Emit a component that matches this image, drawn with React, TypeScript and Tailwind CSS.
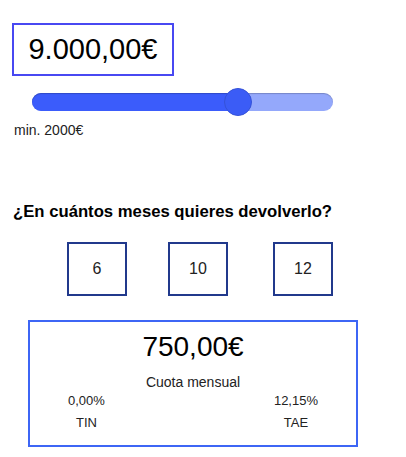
import React from "react";

export default function App() {
  const months = [
    { v: "6", ml: "ml-[67px]" },
    { v: "10", ml: "ml-[41px]" },
    { v: "12", ml: "ml-[45px]" },
  ];
  return (
    <div
      className="w-[406px] h-[457px] bg-white text-black flex flex-col"
      style={{ fontFamily: '"Liberation Sans", Arial, sans-serif' }}
    >
      <div className="mt-[23px] ml-[12px] w-[162px] h-[53px] border-2 border-[#4848f2] flex items-center justify-center">
        <span className="text-[29px] leading-none">9.000,00€</span>
      </div>

      <div className="relative mt-[17px] ml-[32px] w-[301px] h-[18px] rounded-full bg-[#94a8fb] shadow-[inset_0_1px_1px_rgba(0,0,0,0.2)]">
        <div className="h-full w-[210px] rounded-full bg-[#3b5cfb] shadow-[inset_0_1px_1px_rgba(0,0,0,0.2)]" />
        <div className="absolute left-[192px] top-[-5px] w-[28px] h-[28px] rounded-full bg-[#3b5cf6] border border-[#3552d8]" />
      </div>

      <div className="mt-[11px] ml-[14px] text-[14px] leading-[16px] text-[#222]">min. 2000€</div>

      <div className="mt-[64px] ml-[13px] text-[16.7px] leading-[20px] font-bold">
        ¿En cuántos meses quieres devolverlo?
      </div>

      <div className="mt-[20px] flex">
        {months.map((m) => (
          <div
            key={m.v}
            className={`${m.ml} w-[60px] h-[54px] border-2 border-[#21398c] flex items-center justify-center text-[16px] text-[#222]`}
          >
            {m.v}
          </div>
        ))}
      </div>

      <div className="mt-[24px] ml-[28px] w-[330px] h-[127px] border-2 border-[#3d66f5] flex flex-col items-center">
        <div className="mt-[9px] text-[28px] leading-[32px]">750,00€</div>
        <div className="mt-[11px] text-[14px] leading-[16px] text-[#222]">Cuota mensual</div>
        <div className="w-full px-[38px] flex justify-between text-[13px] text-[#222]">
          <div className="flex flex-col items-center">
            <span className="leading-[16px] mt-[3px]">0,00%</span>
            <span className="leading-[16px] mt-[6px]">TIN</span>
          </div>
          <div className="flex flex-col items-center">
            <span className="leading-[16px] mt-[3px]">12,15%</span>
            <span className="leading-[16px] mt-[6px]">TAE</span>
          </div>
        </div>
      </div>
    </div>
  );
}
